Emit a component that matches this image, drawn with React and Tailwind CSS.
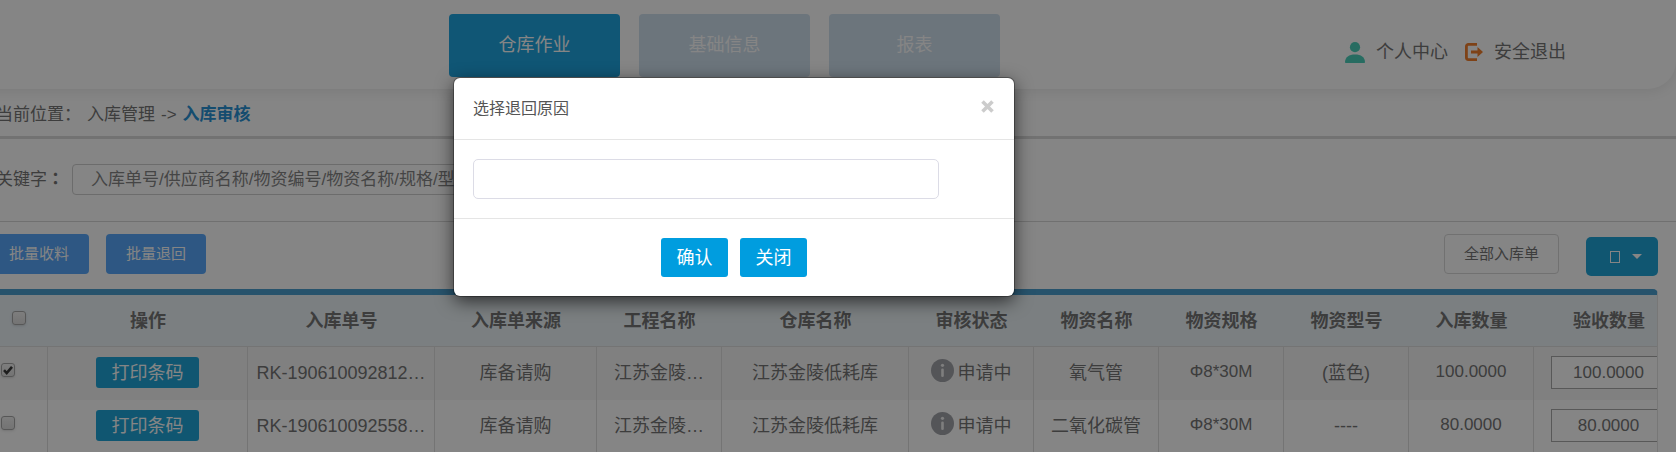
import { useState } from "react";

const tabs = ["仓库作业", "基础信息", "报表"];

const columns = [
  { title: "操作", width: "w-[200px]" },
  { title: "入库单号", width: "w-[187px]" },
  { title: "入库单来源", width: "w-[162px]" },
  { title: "工程名称", width: "w-[125px]" },
  { title: "仓库名称", width: "w-[187px]" },
  { title: "审核状态", width: "w-[125px]" },
  { title: "物资名称", width: "w-[125px]" },
  { title: "物资规格", width: "w-[125px]" },
  { title: "物资型号", width: "w-[125px]" },
  { title: "入库数量", width: "w-[125px]" },
  { title: "验收数量", width: "w-[150px]" },
];

const orders = [
  {
    no: "RK-190610092812…",
    source: "库备请购",
    project: "江苏金陵…",
    warehouse: "江苏金陵低耗库",
    status: "申请中",
    name: "氧气管",
    spec: "Φ8*30M",
    model: "(蓝色)",
    qty: "100.0000",
    checked: true,
  },
  {
    no: "RK-190610092558…",
    source: "库备请购",
    project: "江苏金陵…",
    warehouse: "江苏金陵低耗库",
    status: "申请中",
    name: "二氧化碳管",
    spec: "Φ8*30M",
    model: "----",
    qty: "80.0000",
    checked: false,
  },
];

const UserIcon = () => (
  <svg className="w-5 h-[21px] text-[#4cd0bb]" viewBox="0 0 20 21" fill="currentColor">
    <circle cx="10" cy="5.2" r="5.1" />
    <path d="M0 20.2C0 15 4 12.4 10 12.4s10 2.600 10 7.800c0 .5-.3.800-.8.800H.8c-.5 0-.8-.3-.8-.8z" />
  </svg>
);

const ExitIcon = () => (
  <svg className="w-[18px] h-[18px] text-[#f27f2c]" viewBox="0 0 18 18" fill="none">
    <path d="M12 1.400H3.400a2 2 0 0 0-2 2v11.200a2 2 0 0 0 2 2H12" stroke="currentColor" strokeWidth="2.800" />
    <path d="M6 7.600h6.500V4L18 9l-5.500 5v-3.600H6z" fill="currentColor" />
  </svg>
);

const InfoIcon = () => (
  <svg className="w-[23px] h-[23px] shrink-0 mb-1" viewBox="0 0 23 23">
    <circle cx="11.5" cy="11.5" r="11.5" fill="#a1a3a9" />
    <circle cx="11.5" cy="6.3" r="1.6" fill="#f2f2f2" />
    <rect x="10.200" y="9.500" width="2.600" height="8.500" rx="1.300" fill="#f2f2f2" />
  </svg>
);

const Checkbox = ({ label, checked }) => (
  <span className="relative block w-[14px] h-[14px]">
    <input
      type="checkbox"
      aria-label={label}
      defaultChecked={checked}
      className="peer block w-[14px] h-[14px] appearance-none rounded-[3px] border border-[#a8a8a8] bg-linear-to-b from-[#f0f0f0] to-[#dedede] shadow-sm"
    />
    <svg className="absolute inset-0 hidden peer-checked:block pointer-events-none" viewBox="0 0 14 14" fill="none">
      <path d="M3 7.200l2.700 2.900L11 3.800" stroke="#3a3a3a" strokeWidth="2.600" />
    </svg>
  </span>
);

const OrderRow = ({ order, striped }) => (
  <tr className={`h-[53px] *:border-r *:border-[#dedede] *:pb-[2px] ${striped ? "bg-[#f6f6f6]" : "bg-white"}`}>
    <td>
      <div className="pl-px pb-[6px]">
        <Checkbox label={order.no} checked={order.checked} />
      </div>
    </td>
    <td>
      <button className="w-[103px] h-[31px] rounded-[3px] bg-[#20a5d8] text-white leading-none">打印条码</button>
    </td>
    <td>{order.no}</td>
    <td>{order.source}</td>
    <td>{order.project}</td>
    <td>{order.warehouse}</td>
    <td>
      <div className="flex items-center justify-center gap-1">
        <InfoIcon />
        {order.status}
      </div>
    </td>
    <td>{order.name}</td>
    <td className="text-[17px]">{order.spec}</td>
    <td>{order.model}</td>
    <td className="text-[17px]">{order.qty}</td>
    <td className="px-[17px]">
      <input
        aria-label="验收数量"
        defaultValue={order.qty}
        className="block w-full h-[33px] border border-[#a9a9a9] bg-white text-center text-[17px]"
      />
    </td>
  </tr>
);

const ReasonModal = ({ onClose }) => (
  <div className="absolute inset-0 bg-black/48 flex items-start justify-center pt-[78px] pr-[208px]">
    <div role="dialog" aria-label="选择退回原因" className="w-[560px] rounded-md bg-white ring-1 ring-black/30 shadow-[0_5px_18px_rgba(0,0,0,0.65)]">
      <div className="flex items-center justify-between h-[62px] px-[19px] border-b border-[#e5e5e5]">
        <h4 className="text-base text-[#555]">选择退回原因</h4>
        <button aria-label="关闭窗口" onClick={onClose} className="pb-1">
          <svg className="w-[15px] h-[15px]" viewBox="0 0 15 15" fill="none">
            <path d="M2.500 2.500l10 10M12.500 2.500l-10 10" stroke="#ccc" strokeWidth="3.600" />
          </svg>
        </button>
      </div>
      <div className="px-[19px] py-[19px] border-b border-[#e5e5e5]">
        <input aria-label="退回原因" className="block w-[466px] h-10 px-3 rounded-[5px] border border-[#dcdce6]" />
      </div>
      <div className="flex justify-center gap-3 py-[19px]">
        <button className="w-[67px] h-[39px] rounded-[3px] bg-[#009ddf] text-white text-lg leading-none">确认</button>
        <button onClick={onClose} className="w-[67px] h-[39px] rounded-[3px] bg-[#009ddf] text-white text-lg leading-none">关闭</button>
      </div>
    </div>
  </div>
);

export default function App() {
  const [open, setOpen] = useState(true);

  return (
    <div className="relative h-screen overflow-hidden bg-white text-lg text-[#757575] font-['Liberation_Sans','Noto_Sans_CJK_SC',sans-serif]">
      {/* Header */}
      <header className="flex items-start justify-between h-[89px] pt-[14px] -ml-8 pl-[481px] pr-[110px] rounded-br-[28px] bg-white shadow-[0_3px_12px_rgba(0,0,0,0.08)]">
        <nav className="flex gap-[19px]">
          {tabs.map((tab, i) => (
            <a
              key={tab}
              href="#"
              className={`flex items-center justify-center w-[171px] h-[63px] pb-[2px] rounded text-white ${
                i === 0 ? "bg-[#20a5e0]" : "bg-[#cfe0ee]"
              }`}
            >
              {tab}
            </a>
          ))}
        </nav>
        <div className="flex gap-[17px] pt-6">
          <a href="#" className="flex items-center gap-[11px]">
            <UserIcon />
            个人中心
          </a>
          <a href="#" className="flex items-center gap-[11px]">
            <ExitIcon />
            安全退出
          </a>
        </div>
      </header>

      {/* Breadcrumb */}
      <div className="flex items-center gap-[6px] h-[50px] pt-[5px] -ml-[4px] border-b-3 border-[#dadada] text-[17px]">
        <span>当前位置：</span>
        <span>入库管理</span>
        <span>-&gt;</span>
        <span className="font-bold text-[#2a93d5]">入库审核</span>
      </div>

      {/* Search */}
      <div className="flex items-center h-[83px] pb-px -ml-[4px] border-b border-[#d6d6d6] text-[17px]">
        <label htmlFor="keyword" className="w-[76px]">
          关键字<span className="font-bold font-['Noto_Sans_CJK_TC',sans-serif]" lang="zh-TW">：</span>
        </label>
        <input
          id="keyword"
          placeholder="入库单号/供应商名称/物资编号/物资名称/规格/型号"
          className="w-[480px] h-[31px] px-[18px] rounded border border-[#cfcfcf] placeholder:text-[#858585]"
        />
      </div>

      {/* Toolbar */}
      <div className="flex items-start h-[67px] pt-3 pr-[18px] -ml-[11px] text-[15px]">
        <button className="w-[100px] h-10 rounded bg-[#58a8fb] text-white">批量收料</button>
        <button className="w-[100px] h-10 ml-[17px] rounded bg-[#58a8fb] text-white">批量退回</button>
        <button className="w-[115px] h-10 ml-auto rounded border border-[#d8d8d8]">全部入库单</button>
        <button aria-label="导出" className="flex items-center justify-center gap-3 w-[72px] h-[39px] ml-[27px] mt-[3px] pl-2 rounded-[5px] bg-[#20a5d8] text-white">
          <span className="w-[10px] h-3 border border-white" />
          <span className="border-x-5 border-t-5 border-x-transparent border-t-white" />
        </button>
      </div>

      {/* Table */}
      <div className="mr-[18px] overflow-hidden rounded-tr-[5px] border-t-6 border-r border-t-[#4b9fd0] border-r-[#e4e4e4]">
        <table className="w-[1684px] table-fixed border-separate border-spacing-0 text-center whitespace-nowrap">
          <thead>
            <tr className="h-[52px] bg-[#ebf3f8]">
              <th className="w-12 border-b border-[#dedede] pl-3 pb-[6px]">
                <Checkbox label="全选" />
              </th>
              {columns.map((col) => (
                <th key={col.title} className={`${col.width} border-b border-[#dedede] pt-px font-bold`}>
                  {col.title}
                </th>
              ))}
            </tr>
          </thead>
          <tbody>
            {orders.map((order, i) => (
              <OrderRow key={order.no} order={order} striped={i % 2 === 0} />
            ))}
          </tbody>
        </table>
      </div>

      {open && <ReasonModal onClose={() => setOpen(false)} />}
    </div>
  );
}
